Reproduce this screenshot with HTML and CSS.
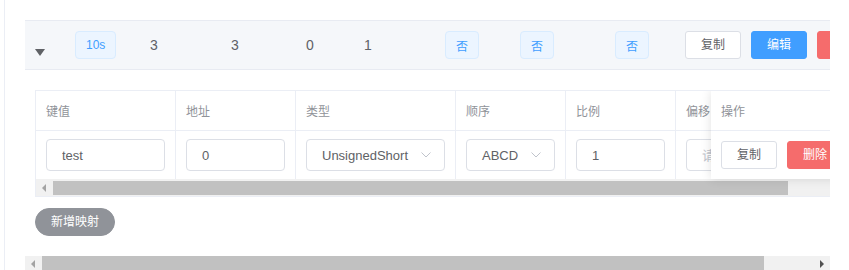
FILE: index.html
```html
<!DOCTYPE html>
<html lang="zh-CN">
<head>
    <meta charset="UTF-8">
    <meta name="viewport" content="width=device-width, initial-scale=1.0">
    <title>设备映射</title>
    <link rel="stylesheet" href="styles.css">
</head>
<body>
    <div class="panel">
        <div class="scroller">
            <div class="scroller_inner">
                <div class="main_row">
                    <div class="cell c_expand"><span class="caret"></span></div>
                    <div class="cell c_period"><span class="tag">10s</span></div>
                    <div class="cell c_a">3</div>
                    <div class="cell c_b">3</div>
                    <div class="cell c_c">0</div>
                    <div class="cell c_d">1</div>
                    <div class="cell c_e"><span class="tag">否</span></div>
                    <div class="cell c_f"><span class="tag">否</span></div>
                    <div class="cell c_g"><span class="tag">否</span></div>
                    <div class="cell c_ops">
                        <button class="btn">复制</button>
                        <button class="btn btn_primary">编辑</button>
                        <button class="btn btn_danger">删除</button>
                    </div>
                </div>

                <div class="expand">
                    <div class="sub_table">
                        <div class="sub_view">
                            <div class="sub_grid">
                                <div class="th">键值</div>
                                <div class="th">地址</div>
                                <div class="th">类型</div>
                                <div class="th">顺序</div>
                                <div class="th">比例</div>
                                <div class="th">偏移</div>
                                <div class="th">操作</div>

                                <div class="td"><input class="input" type="text" value="test"></div>
                                <div class="td"><input class="input" type="text" value="0"></div>
                                <div class="td">
                                    <div class="select">UnsignedShort
                                        <svg class="chevron" width="10" height="6" viewBox="0 0 10 6"><polyline points="0.5,0.5 5,5 9.5,0.5" fill="none" stroke="#c0c4cc" stroke-width="1"/></svg>
                                    </div>
                                </div>
                                <div class="td">
                                    <div class="select">ABCD
                                        <svg class="chevron" width="10" height="6" viewBox="0 0 10 6"><polyline points="0.5,0.5 5,5 9.5,0.5" fill="none" stroke="#c0c4cc" stroke-width="1"/></svg>
                                    </div>
                                </div>
                                <div class="td"><input class="input" type="text" value="1"></div>
                                <div class="td"><input class="input" type="text" placeholder="请输入偏移"></div>
                                <div class="td"></div>
                            </div>
                        </div>
                        <div class="fixed_ops">
                            <div class="fixed_th">操作</div>
                            <div class="fixed_td">
                                <button class="btn">复制</button>
                                <button class="btn btn_danger">删除</button>
                            </div>
                        </div>
                        <div class="hbar inner_bar">
                            <span class="arrow_left"></span>
                            <span class="thumb"></span>
                        </div>
                    </div>
                    <button class="btn btn_round">新增映射</button>
                </div>
            </div>
        </div>
        <div class="hbar outer_bar">
            <span class="arrow_left"></span>
            <span class="thumb"></span>
            <span class="arrow_right"></span>
        </div>
    </div>
</body>
</html>
```

FILE: styles.css
```css
*{
    box-sizing: border-box;
}

body{
    margin: 0;
    background: #fff;
    color: #606266;
    font-family: "Liberation Sans", "Noto Sans CJK SC", sans-serif;
}

.panel{
    margin-left: 4px;
    border-left: 1px solid #ebeef5;
    padding: 20px 0 0 20px;
    height: 270px;
    overflow: hidden;
}

.scroller{
    width: 805px;
    overflow: hidden;
}

.scroller_inner{
    width: 865px;
}

.main_row{
    display: flex;
    align-items: center;
    height: 50px;
    background: #f5f7fa;
    border-top: 1px solid #e8ebf2;
    border-bottom: 1px solid #e8ebf2;
    font-size: 14px;
}

    .main_row > .cell{
        flex: none;
        display: flex;
        align-items: center;
    }

    .c_expand{ width: 50px; padding-left: 10px; align-self: stretch; }
    .c_period{ width: 75px; }
    .c_a{ width: 81px; }
    .c_b{ width: 75px; }
    .c_c{ width: 58px; }
    .c_d{ width: 81px; }
    .c_e{ width: 75px; }
    .c_f{ width: 95px; }
    .c_g{ width: 70px; }
    .c_ops{ width: 180px; }

.caret{
    width: 0;
    height: 0;
    margin-top: 14px;
    border-left: 5.5px solid transparent;
    border-right: 5.5px solid transparent;
    border-top: 7px solid #606266;
}

.tag{
    display: inline-flex;
    align-items: center;
    height: 28px;
    padding: 0 10px;
    border: 1px solid #d9ecff;
    border-radius: 4px;
    background: #ecf5ff;
    color: #409eff;
    font-size: 12px;
}

.btn{
    flex: none;
    height: 28px;
    padding: 0 15px;
    border: 1px solid #dcdfe6;
    border-radius: 3px;
    background: #fff;
    color: #606266;
    font-family: inherit;
    font-size: 12px;
    line-height: 1;
}

.btn + .btn{
    margin-left: 10px;
}

.btn_primary{
    background: #409eff;
    border-color: #409eff;
    color: #fff;
}

.btn_danger{
    background: #f56c6c;
    border-color: #f56c6c;
    color: #fff;
}

.expand{
    padding: 20px 10px 20px 10px;
}

.sub_table{
    position: relative;
    width: 845px;
    border-top: 1px solid #ebeef5;
    border-left: 1px solid #ebeef5;
    border-bottom: 1px solid #ebeef5;
}

    .sub_table > .sub_view{
        overflow: hidden;
    }

.sub_grid{
    display: grid;
    grid-template-columns: 140px 120px 160px 110px 110px 120px 185px;
}

    .sub_grid > .th{
        display: flex;
        align-items: center;
        height: 40px;
        padding: 0 10px;
        border-right: 1px solid #ebeef5;
        border-bottom: 1px solid #ebeef5;
        color: #909399;
        font-size: 12px;
        white-space: nowrap;
    }

    .sub_grid > .td{
        display: flex;
        align-items: center;
        height: 48px;
        padding: 0 10px;
        border-right: 1px solid #ebeef5;
    }

.input{
    width: 100%;
    height: 32px;
    padding: 0 15px;
    border: 1px solid #dcdfe6;
    border-radius: 4px;
    color: #606266;
    font-family: inherit;
    font-size: 13px;
    outline: none;
}

.input::placeholder{
    color: #c0c4cc;
}

.select{
    display: flex;
    align-items: center;
    width: 100%;
    height: 32px;
    padding: 0 13px 0 15px;
    border: 1px solid #dcdfe6;
    border-radius: 4px;
    font-size: 13px;
    white-space: nowrap;
}

    .select > .chevron{
        margin-left: auto;
        flex: none;
    }

.fixed_ops{
    position: absolute;
    top: 0;
    right: 0;
    width: 169px;
    background: #fff;
    box-shadow: 0 0 10px rgba(0, 0, 0, .12);
    clip-path: inset(0 -12px -12px -12px);
}

    .fixed_ops > .fixed_th{
        display: flex;
        align-items: center;
        height: 40px;
        padding: 0 10px;
        border-bottom: 1px solid #ebeef5;
        color: #909399;
        font-size: 12px;
    }

    .fixed_ops > .fixed_td{
        display: flex;
        align-items: center;
        height: 48px;
        padding: 0 10px;
    }

.hbar{
    display: flex;
    align-items: center;
    background: #f1f1f1;
}

    .hbar > .thumb{
        flex: none;
        background: #c1c1c1;
    }

.arrow_left{
    flex: none;
    width: 0;
    height: 0;
    border-top: 4px solid transparent;
    border-bottom: 4px solid transparent;
    border-right: 4px solid #a3a3a3;
}

.arrow_right{
    flex: none;
    width: 0;
    height: 0;
    margin-left: auto;
    margin-right: 6px;
    border-top: 4px solid transparent;
    border-bottom: 4px solid transparent;
    border-left: 4px solid #505050;
}

.inner_bar{
    height: 17px;
}

    .inner_bar > .arrow_left{ margin-left: 6px; }
    .inner_bar > .thumb{ margin-left: 7px; width: 735px; height: 14px; }

.btn_round{
    margin-top: 11px;
    border-radius: 20px;
    background: #909399;
    border-color: #909399;
    color: #fff;
}

.outer_bar{
    width: 805px;
    height: 15px;
}

    .outer_bar > .arrow_left{ margin-left: 6px; }
    .outer_bar > .thumb{ margin-left: 7px; width: 722px; height: 15px; }
```
